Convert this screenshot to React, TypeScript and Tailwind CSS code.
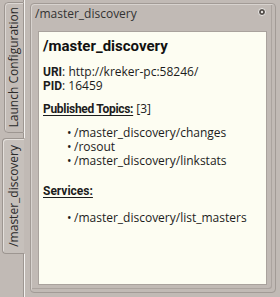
export default function App() {
  const topics = ['/master_discovery/changes', '/rosout', '/master_discovery/linkstats'];
  const services = ['/master_discovery/list_masters'];

  return (
    <div className="w-[280px] h-[297px] overflow-hidden bg-[#c1bab5] flex font-['Open_Sans',sans-serif] text-[12px] text-[#1c1c1c]">
      {/* West tab bar */}
      <div className="w-[24px] shrink-0 flex flex-col">
        <div className="h-[2px] border-r border-[#9d9691] shadow-[1px_0_0_#f4f2f0]" />
        <div className="ml-[4px] h-[131px] border border-[#9d9691] rounded-l-[4px] bg-[#c3bcb7] flex items-center justify-center shadow-[inset_1px_1px_0_#dcd7d3,1px_0_0_#f4f2f0]">
          <span className="[writing-mode:vertical-rl] rotate-180 leading-[14px] text-[#2b2b2b]">Launch Configuration</span>
        </div>
        <div className="h-[5px] border-r border-[#9d9691] shadow-[1px_0_0_#f4f2f0]" />
        <div className="ml-[2px] h-[116px] border border-r-0 border-[#9d9691] rounded-l-[4px] bg-[#c6c0bb] flex items-center justify-center shadow-[inset_1px_1px_0_#e4e0dc]">
          <span className="[writing-mode:vertical-rl] rotate-180 leading-[14px] text-[#2b2b2b]">/master_discovery</span>
        </div>
        <div className="flex-1 border-r border-[#9d9691] shadow-[1px_0_0_#f4f2f0]" />
      </div>

      {/* Dock widget */}
      <div className="flex-1 flex pl-[6px] pt-[3px] pb-[4px] pr-[4px]">
        <div className="flex-1 flex flex-col border border-[#a29b96] rounded-[4px] shadow-[inset_1px_1px_0_#d8d3cf,inset_-3px_-3px_0_#c1bab5,inset_-4px_-4px_0_#aba49f]">
          <div className="h-[27px] flex items-start justify-between pl-[4px] pr-[9px]">
            <span className="pt-[2px] leading-[16px] text-[#333]">/master_discovery</span>
            <svg className="mt-[4px]" width="8" height="8" viewBox="0 0 8 8">
              <circle cx="4" cy="4" r="3.5" fill="#4f4a46" stroke="#f2f0ee" strokeWidth="1" />
              <circle cx="4" cy="4" r="1.2" fill="#e8e5e2" />
            </svg>
          </div>

          {/* Description browser */}
          <div className="flex-1 ml-[7px] mr-[8px] mb-[7px] bg-[#fdfdf2] border border-[#a9a29d] px-[4px] pt-[5px]">
            <div className="font-['Roboto',sans-serif] text-[15px] font-bold leading-[18px] text-[#111]">/master_discovery</div>

            <div className="mt-[10px] leading-[14px]">
              <span className="font-['Roboto',sans-serif] font-bold">URI</span>: http://kreker-pc:58246/
            </div>
            <div className="leading-[14px]">
              <span className="font-['Roboto',sans-serif] font-bold">PID</span>: 16459
            </div>

            <div className="mt-[9px] leading-[14px]">
              <span className="font-['Roboto',sans-serif] font-bold underline underline-offset-2 tracking-[-0.3px]">Published Topics:</span> [3]
            </div>
            <ul className="mt-[10px] pl-[24px]">
              {topics.map((t) => (
                <li key={t} className="flex leading-[14px] h-[14px]">
                  <span className="w-[7px]">•</span>
                  <span>{t}</span>
                </li>
              ))}
            </ul>

            <div className="mt-[16px] leading-[14px]">
              <span className="font-['Roboto',sans-serif] font-bold underline underline-offset-2">Services:</span>
            </div>
            <ul className="mt-[13px] pl-[24px]">
              {services.map((s) => (
                <li key={s} className="flex leading-[14px] h-[14px]">
                  <span className="w-[7px]">•</span>
                  <span>{s}</span>
                </li>
              ))}
            </ul>
          </div>
        </div>
      </div>
    </div>
  );
}
